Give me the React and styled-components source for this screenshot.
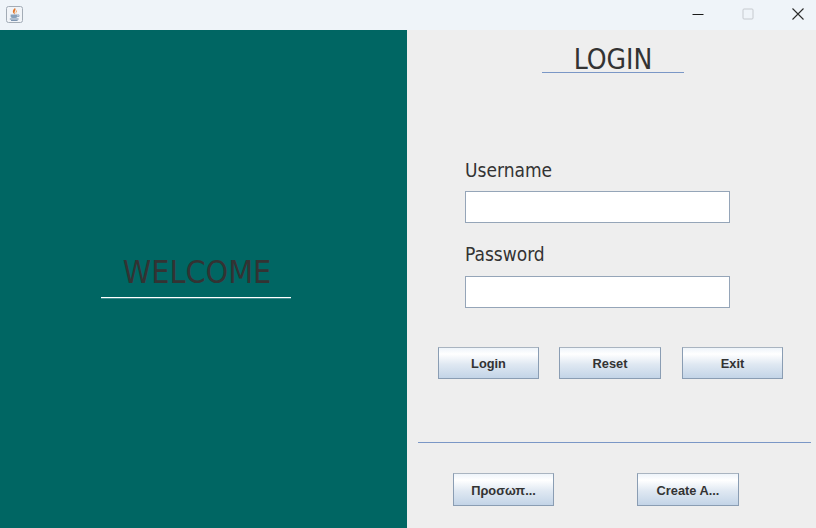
import React from "react";
import styled, { createGlobalStyle } from "styled-components";

const GlobalStyle = createGlobalStyle`
  html, body {
    margin: 0;
    padding: 0;
    background: #eeeeee;
  }
  * {
    box-sizing: border-box;
  }
`;

const Frame = styled.div`
  width: 816px;
  height: 528px;
  display: flex;
  flex-direction: column;
  overflow: hidden;
  font-family: "DejaVu Sans Condensed", "DejaVu Sans", sans-serif;
  color: #333333;
`;

const TitleBar = styled.div`
  height: 30px;
  flex: none;
  display: flex;
  align-items: center;
  justify-content: space-between;
  padding: 0 0 2px 6px;
  background: #eff4f9;
`;

const WindowButtons = styled.div`
  display: flex;
  align-items: center;
  height: 100%;
  margin-right: -7px;
`;

const WindowButton = styled.div`
  width: 50px;
  height: 100%;
  display: flex;
  align-items: center;
  justify-content: center;
`;

const Body = styled.div`
  flex: 1;
  display: flex;
  min-height: 0;
`;

const WelcomePanel = styled.div`
  width: 407px;
  flex: none;
  background: #006663;
  padding: 225px 0 0 101px;
`;

const WelcomeTitle = styled.div`
  width: 190px;
  height: 43px;
  padding-left: 2px;
  border-bottom: 1px solid #ffffff;
  box-shadow: 0 1px 0 #3f8d8e;
  text-align: center;
  font-size: 32px;
  line-height: 35px;
  color: #333333;
`;

const LoginPanel = styled.div`
  flex: 1;
  display: flex;
  flex-direction: column;
  background: #eeeeee;
`;

const LoginTitle = styled.div`
  width: 142px;
  height: 43px;
  margin: 0 0 0 135px;
  border-bottom: 1px solid #7a97c6;
  text-align: center;
  font-size: 28px;
  line-height: 59px;
  color: #333333;
`;

const Form = styled.div`
  display: flex;
  flex-direction: column;
  padding: 85px 0 0 58px;
`;

const Label = styled.label`
  height: ${(p) => p.$h}px;
  margin-top: ${(p) => p.$top || 0}px;
  font-size: 19px;
  line-height: 24px;
  color: #333333;
`;

const Input = styled.input`
  display: block;
  width: 265px;
  height: 32px;
  margin: 0;
  padding: 0 6px;
  background: #ffffff;
  border: 1px solid #95a5b8;
  border-radius: 0;
  outline: none;
`;

const ButtonRow = styled.div`
  display: flex;
  margin-top: ${(p) => p.$top}px;
  padding-left: ${(p) => p.$left}px;
`;

const Button = styled.button`
  width: ${(p) => p.$w || 101}px;
  height: ${(p) => p.$h || 32}px;
  margin: 0 0 0 ${(p) => p.$gap || 0}px;
  padding: ${(p) => (p.$h ? 2 : 0)}px 0 0;
  border: 1px solid #8a9db3;
  border-top-color: #a9b4c0;
  border-radius: 0;
  background: linear-gradient(#eef4fa 0%, #ffffff 20%, #dfe8f2 55%, #c3d4e7 100%);
  font-family: "Liberation Sans", Arial, sans-serif;
  font-size: 12.8px;
  font-weight: 700;
  color: #333333;
`;

const Divider = styled.div`
  height: 1px;
  margin: 63px 5px 0 11px;
  background: #7a97c6;
`;

function JavaIcon() {
  return (
    <svg width="17" height="17" viewBox="0 0 17 17">
      <rect x="0.5" y="0.5" width="16" height="16" rx="2" fill="#f1f4f8" stroke="#a3acb6" />
      <path d="M9 2 C10.8 4.4 7.4 5.2 9 8.4 C6.8 7.2 5.6 5 9 2 Z" fill="#e2762b" />
      <path d="M11 4 C11.6 5.8 9.6 6.4 10.2 8.2 C9.2 7 9.4 5.2 11 4 Z" fill="#eaa765" />
      <path d="M4.6 8.4 H11.4 V10.4 C11.4 11.5 10.2 12 8 12 C5.8 12 4.6 11.5 4.6 10.4 Z" fill="#86a0bb" />
      <path d="M11.4 8.9 H13 V10.5 H11.2" fill="none" stroke="#86a0bb" strokeWidth="0.8" />
      <path d="M3.8 13 H12.6 M5 14.4 H11.6" stroke="#6f8aa8" strokeWidth="1" />
    </svg>
  );
}

function MinimizeIcon() {
  return (
    <svg width="12" height="12" viewBox="0 0 12 12">
      <path d="M0.5 6.5 H11.5" stroke="#1a1a1a" strokeWidth="1" />
    </svg>
  );
}

function MaximizeIcon() {
  return (
    <svg width="12" height="12" viewBox="0 0 12 12">
      <rect x="1" y="1" width="10" height="10" rx="1" fill="none" stroke="#c6cacf" strokeWidth="1" />
    </svg>
  );
}

function CloseIcon() {
  return (
    <svg width="12" height="12" viewBox="0 0 12 12">
      <path d="M0.5 0.5 L11.5 11.5 M11.5 0.5 L0.5 11.5" stroke="#2b2b2b" strokeWidth="1.1" />
    </svg>
  );
}

export default function App() {
  return (
    <Frame>
      <GlobalStyle />
      <TitleBar>
        <JavaIcon />
        <WindowButtons>
          <WindowButton><MinimizeIcon /></WindowButton>
          <WindowButton><MaximizeIcon /></WindowButton>
          <WindowButton><CloseIcon /></WindowButton>
        </WindowButtons>
      </TitleBar>
      <Body>
        <WelcomePanel>
          <WelcomeTitle>WELCOME</WelcomeTitle>
        </WelcomePanel>
        <LoginPanel>
          <LoginTitle>LOGIN</LoginTitle>
          <Form>
            <Label $h={33}>Username</Label>
            <Input type="text" />
            <Label $h={34} $top={19}>Password</Label>
            <Input type="text" />
          </Form>
          <ButtonRow $top={39} $left={31}>
            <Button>Login</Button>
            <Button $w={102} $gap={20}>Reset</Button>
            <Button $gap={21}>Exit</Button>
          </ButtonRow>
          <Divider />
          <ButtonRow $top={30} $left={46}>
            <Button $h={33}>Προσωπ...</Button>
            <Button $w={102} $h={33} $gap={83}>Create A...</Button>
          </ButtonRow>
        </LoginPanel>
      </Body>
    </Frame>
  );
}
